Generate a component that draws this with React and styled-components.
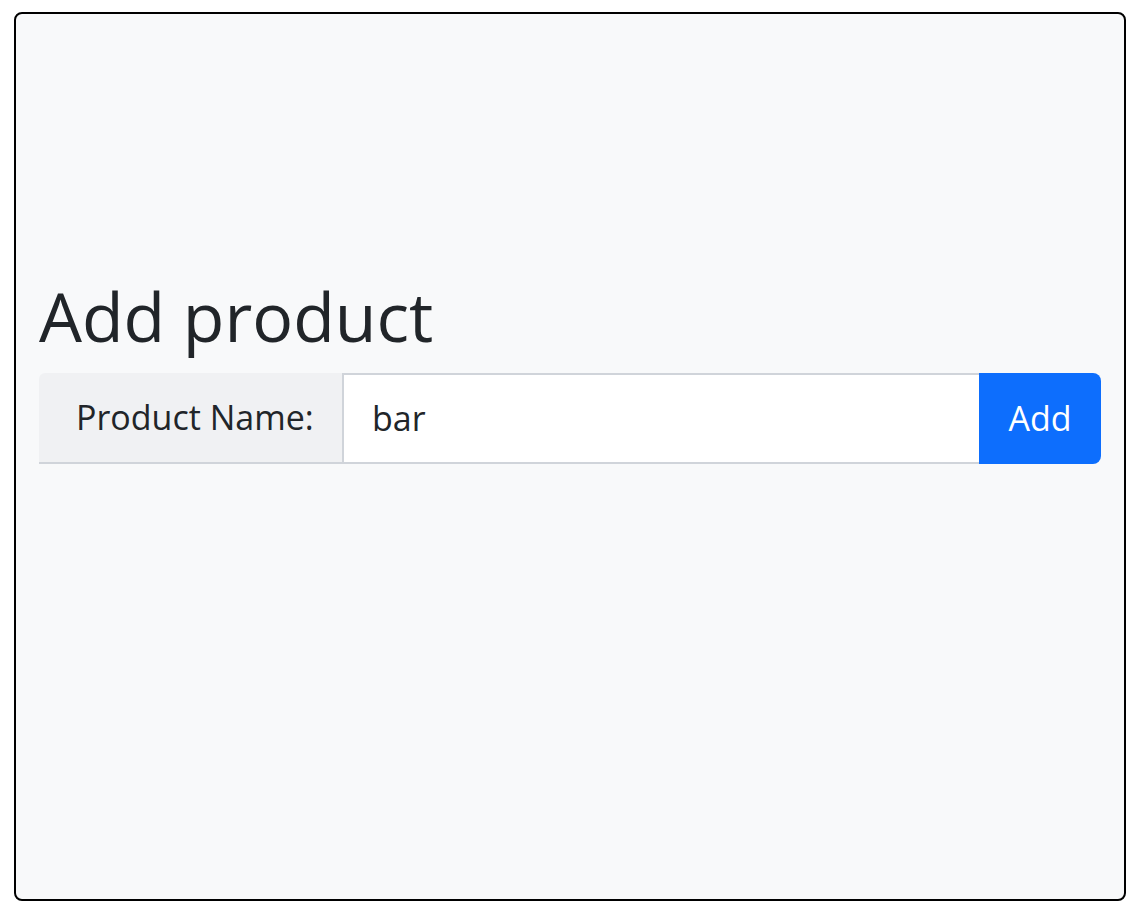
import React from "react";
import styled, { createGlobalStyle } from "styled-components";

const Global = createGlobalStyle`
  html, body { margin: 0; padding: 0; background: #ffffff; }
  body { font-family: "Open Sans", "Noto Sans", sans-serif; color: #212529; }
  * { box-sizing: border-box; }
`;

const Page = styled.div`
  padding: 12px 0 0 14px;
`;

const Frame = styled.div`
  width: 1112px;
  height: 889px;
  border: 2px solid #000;
  border-radius: 8px;
  background: #f8f9fa;
  padding: 261px 23px 0 23px;
  display: flex;
  flex-direction: column;
`;

const Title = styled.h1`
  margin: 0 0 16px 0;
  font-size: 68px;
  font-weight: 400;
  line-height: 1.2;
  color: #212529;
`;

const Group = styled.form`
  display: flex;
  align-items: stretch;
  height: 91px;
  width: 100%;
`;

const Label = styled.label`
  display: flex;
  align-items: center;
  width: 303px;
  padding: 0 0 0 37px;
  background: #f0f1f3;
  border-bottom: 2px solid #d0d4da;
  border-top-left-radius: 6px;
  font-size: 34px;
  white-space: nowrap;
`;

const Input = styled.input`
  flex: 1;
  min-width: 0;
  border: 2px solid #d0d4da;
  border-right: none;
  background: #fff;
  padding: 0 0 0 28px;
  font-family: inherit;
  font-size: 34px;
  color: #212529;
  outline: none;
`;

const Button = styled.button`
  width: 122px;
  border: none;
  background: #0d6efd;
  color: #fff;
  padding: 0;
  font-family: inherit;
  font-size: 34px;
  border-radius: 0 8px 8px 0;
  cursor: pointer;
`;

export default function App() {
  return (
    <>
      <Global />
      <Page>
        <Frame>
          <Title>Add product</Title>
          <Group onSubmit={(e) => e.preventDefault()}>
            <Label htmlFor="pn">Product Name:</Label>
            <Input id="pn" defaultValue="bar" />
            <Button type="submit">Add</Button>
          </Group>
        </Frame>
      </Page>
    </>
  );
}
